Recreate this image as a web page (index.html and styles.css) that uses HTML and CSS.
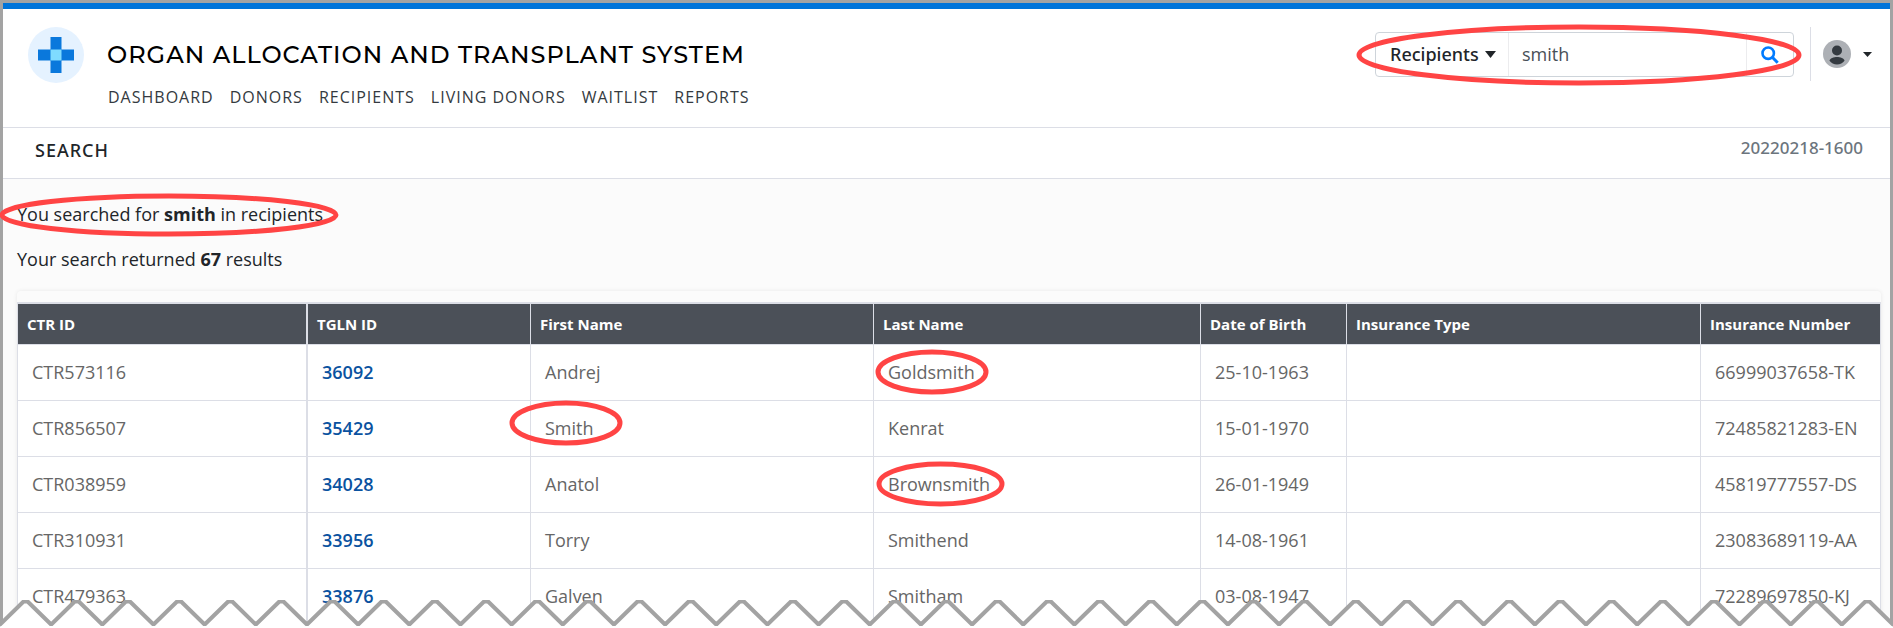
FILE: index.html
```html
<!DOCTYPE html>
<html lang="en">
<head>
    <meta charset="UTF-8">
    <meta name="viewport" content="width=device-width, initial-scale=1.0">
    <title>Search - Organ Allocation and Transplant System</title>
    <link rel="stylesheet" href="styles.css">
</head>
<body>
    <div class="frame">
        <header class="header">
            <svg class="logo" viewBox="0 0 56 56" aria-hidden="true">
                <circle cx="28" cy="28" r="28" fill="#e5f2ff"/>
                <path d="M22.5 10h11v12.5H46v11H33.5V46h-11V33.5H10v-11h12.5z" fill="#0a78dc"/>
                <path d="M22.5 22.5h11v11h-11z" fill="#7fdbff"/>
            </svg>
            <div class="brand">
                <h1 class="title">ORGAN ALLOCATION AND TRANSPLANT SYSTEM</h1>
                <nav class="nav">
                    <a href="#">DASHBOARD</a>
                    <a href="#">DONORS</a>
                    <a href="#">RECIPIENTS</a>
                    <a href="#">LIVING DONORS</a>
                    <a href="#">WAITLIST</a>
                    <a href="#">REPORTS</a>
                </nav>
            </div>
            <form class="search">
                <div class="search-type">
                    <select aria-label="Search in">
                        <option>Recipients</option>
                        <option>Donors</option>
                    </select>
                    <svg class="type-caret" viewBox="0 0 11 7" aria-hidden="true"><path d="M0 0h11L5.5 7z" fill="#212529"/></svg>
                </div>
                <input class="search-text" type="text" value="smith" aria-label="Search text">
                <button class="search-button" type="button" aria-label="Search">
                    <svg viewBox="0 0 18 18"><circle cx="7.2" cy="7.2" r="5.7" fill="none" stroke="#007bff" stroke-width="2.6"/><path d="M11.3 11.3l5.4 5.4" stroke="#007bff" stroke-width="3"/></svg>
                </button>
                <svg class="mark mark-search"><ellipse cx="50%" cy="50%" rx="50%" ry="50%"/></svg>
            </form>
            <button class="user" type="button" aria-label="Account">
                <svg class="avatar" viewBox="0 0 28 28"><circle cx="14" cy="14" r="14" fill="#adb0b5"/><circle cx="14" cy="10.5" r="5" fill="#343a40"/><path d="M6.5 20.8c0-2.5 4.5-3.8 7.5-3.8s7.5 1.3 7.5 3.8c-1.6 2.3-4.4 3.7-7.5 3.7s-5.9-1.4-7.5-3.7z" fill="#343a40"/></svg>
                <svg class="caret" viewBox="0 0 9 5"><path d="M0 0h9L4.5 5z" fill="#212529"/></svg>
            </button>
        </header>

        <div class="subheader">
            <h2 class="page-name">SEARCH</h2>
            <span class="version">20220218-1600</span>
        </div>

        <main class="content">
            <p class="summary">You searched for <strong>smith</strong> in recipients<svg class="mark mark-query"><ellipse cx="50%" cy="50%" rx="50%" ry="50%"/></svg></p>
            <p class="summary">Your search returned <strong>67</strong> results</p>

            <div class="card">
                <table class="results">
                    <colgroup>
                        <col class="col-ctr"><col class="col-tgln"><col class="col-first"><col class="col-last"><col class="col-dob"><col class="col-type"><col class="col-number">
                    </colgroup>
                    <thead>
                        <tr><th>CTR ID</th><th>TGLN ID</th><th>First Name</th><th>Last Name</th><th>Date of Birth</th><th>Insurance Type</th><th>Insurance Number</th></tr>
                    </thead>
                    <tbody>
                        <tr>
                            <td>CTR573116</td>
                            <td><a href="#">36092</a></td>
                            <td>Andrej</td>
                            <td><span class="hit">Goldsmith<svg class="mark mark-goldsmith"><ellipse cx="50%" cy="50%" rx="50%" ry="50%"/></svg></span></td>
                            <td>25-10-1963</td>
                            <td></td>
                            <td>66999037658-TK</td>
                        </tr>
                        <tr>
                            <td>CTR856507</td>
                            <td><a href="#">35429</a></td>
                            <td><span class="hit">Smith<svg class="mark mark-smith"><ellipse cx="50%" cy="50%" rx="50%" ry="50%"/></svg></span></td>
                            <td>Kenrat</td>
                            <td>15-01-1970</td>
                            <td></td>
                            <td>72485821283-EN</td>
                        </tr>
                        <tr>
                            <td>CTR038959</td>
                            <td><a href="#">34028</a></td>
                            <td>Anatol</td>
                            <td><span class="hit">Brownsmith<svg class="mark mark-brownsmith"><ellipse cx="50%" cy="50%" rx="50%" ry="50%"/></svg></span></td>
                            <td>26-01-1949</td>
                            <td></td>
                            <td>45819777557-DS</td>
                        </tr>
                        <tr>
                            <td>CTR310931</td>
                            <td><a href="#">33956</a></td>
                            <td>Torry</td>
                            <td>Smithend</td>
                            <td>14-08-1961</td>
                            <td></td>
                            <td>23083689119-AA</td>
                        </tr>
                        <tr>
                            <td>CTR479363</td>
                            <td><a href="#">33876</a></td>
                            <td>Galven</td>
                            <td>Smitham</td>
                            <td>03-08-1947</td>
                            <td></td>
                            <td>72289697850-KJ</td>
                        </tr>
                    </tbody>
                </table>
            </div>
        </main>

        <!-- Torn bottom edge, 37 teeth -->
        <svg class="torn-edge" viewBox="0 0 1887 28" preserveAspectRatio="none" aria-hidden="true">
            <path fill="#fff" stroke="#a3a3a3" stroke-width="4" stroke-linejoin="bevel" d="M0 24.5
                l23.5-23h4l23.5 23l23.5-23h4l23.5 23l23.5-23h4l23.5 23l23.5-23h4l23.5 23l23.5-23h4l23.5 23
                l23.5-23h4l23.5 23l23.5-23h4l23.5 23l23.5-23h4l23.5 23l23.5-23h4l23.5 23l23.5-23h4l23.5 23
                l23.5-23h4l23.5 23l23.5-23h4l23.5 23l23.5-23h4l23.5 23l23.5-23h4l23.5 23l23.5-23h4l23.5 23
                l23.5-23h4l23.5 23l23.5-23h4l23.5 23l23.5-23h4l23.5 23l23.5-23h4l23.5 23l23.5-23h4l23.5 23
                l23.5-23h4l23.5 23l23.5-23h4l23.5 23l23.5-23h4l23.5 23l23.5-23h4l23.5 23l23.5-23h4l23.5 23
                l23.5-23h4l23.5 23l23.5-23h4l23.5 23l23.5-23h4l23.5 23l23.5-23h4l23.5 23l23.5-23h4l23.5 23
                l23.5-23h4l23.5 23l23.5-23h4l23.5 23l23.5-23h4l23.5 23l23.5-23h4l23.5 23l23.5-23h4l23.5 23
                l23.5-23h4l23.5 23l23.5-23h4l23.5 23
                l10 0V40H-10V24.5z"/>
        </svg>
    </div>
</body>
</html>
```
FILE: styles.css
```css
* { margin: 0; padding: 0; box-sizing: border-box; }

body {
    font-family: "Open Sans", "Noto Sans", sans-serif;
    font-size: 18px;
    line-height: 27px;
    color: #212529;
    background: #fbfbfb;
    overflow-x: hidden;
}

a { text-decoration: none; }

button, input, select {
    font: inherit;
    border: 0;
    background: none;
}

.frame {
    position: relative;
    min-height: 100vh;
    border: 3px solid #a3a3a3;
    border-bottom: 0;
}

/* Header */
.header {
    display: flex;
    align-items: flex-start;
    padding: 18px 17px 12px 25px;
    background: #fff;
    border-top: 6px solid #0074d9;
    border-bottom: 1px solid #dcdee6;
}

.logo {
    width: 56px;
    height: 56px;
    flex: none;
}

.brand {
    margin-left: 23px;
    padding-top: 10px;
}

.title {
    font-family: Montserrat, Inter, sans-serif;
    font-size: 24px;
    font-weight: 500;
    line-height: 36px;
    letter-spacing: 1px;
    color: #000;
    white-space: nowrap;
}

.nav {
    display: flex;
    gap: 16px;
    padding: 12px 0 6px 1px;
    font-size: 16px;
    line-height: 24px;
    letter-spacing: 1px;
    white-space: nowrap;
}

.nav a { color: #343a40; }

.search {
    position: relative;
    display: flex;
    width: 419px;
    height: 45px;
    margin: 5px 16px 0 auto;
    border: 1px solid #ced4da;
    border-radius: 4px;
}

.search-type {
    position: relative;
    width: 133px;
    border-right: 1px solid #ececee;
}

.search-type select {
    width: 100%;
    height: 100%;
    padding-left: 14px;
    font-family: "Noto Sans", sans-serif;
    font-weight: 500;
    color: #212529;
    appearance: none;
}

.type-caret {
    position: absolute;
    top: 18px;
    right: 12px;
    width: 11px;
    height: 7px;
    pointer-events: none;
}

.search-text {
    flex: 1;
    min-width: 0;
    padding-left: 13px;
    color: #495057;
}

.search-button {
    width: 47px;
    border-left: 1px solid #ececee;
}

.search-button svg {
    display: block;
    width: 18px;
    height: 18px;
    margin: 0 auto;
}

.user {
    display: flex;
    align-items: center;
    gap: 12px;
    height: 54px;
    padding: 0 1px 0 12px;
    border-left: 1px solid #dcdee6;
}

.avatar { width: 28px; height: 28px; }
.caret { width: 9px; height: 5px; }

/* Page name bar */
.subheader {
    display: flex;
    justify-content: space-between;
    padding: 9px 27px 14px 32px;
    background: #fff;
    border-bottom: 1px solid #dcdee6;
}

.page-name {
    font-family: "Noto Sans", sans-serif;
    font-size: 18px;
    font-weight: 500;
    line-height: 27px;
    letter-spacing: 1px;
}

.version {
    font-family: "Noto Sans", sans-serif;
    font-size: 17px;
    font-weight: 500;
    line-height: 22px;
    color: #6c757d;
}

/* Results */
.content { padding: 22px 9px 0 14px; }

.summary {
    position: relative;
    margin-bottom: 18px;
}

.card {
    padding-top: 11px;
    border-radius: 4px;
    box-shadow: 0 0 4px rgba(0, 0, 0, 0.08);
}

.results {
    width: 100%;
    table-layout: fixed;
    border-collapse: separate;
    border-spacing: 0;
    border-top: 2px solid #dcdee6;
    border-left: 1px solid #dcdee6;
    background: #fff;
}

.col-ctr { width: 290px; }
.col-tgln { width: 223px; }
.col-first { width: 343px; }
.col-last { width: 327px; }
.col-dob { width: 146px; }
.col-number { width: 180px; }

.results th, .results td {
    text-align: left;
    white-space: nowrap;
    border-right: 1px solid #dcdee6;
    border-bottom: 1px solid #dcdee6;
}

.results th:first-child, .results td:first-child { border-right-width: 2px; }

.results th {
    height: 41px;
    padding: 0 9px;
    font-size: 15px;
    font-weight: 700;
    line-height: 24px;
    color: #fff;
    background: #4b5058;
}

.results td {
    height: 56px;
    padding: 0 0 1px 14px;
    color: #666;
}

.results td a {
    font-weight: 600;
    color: #0a52a0;
}

.hit { position: relative; }

/* Red rings round the matches */
.mark {
    position: absolute;
    z-index: 1;
    overflow: visible;
    fill: none;
    stroke: #ff4444;
    stroke-width: 5px;
    pointer-events: none;
}

.mark-search { top: -6px; left: -17px; width: 440px; height: 56px; }
.mark-query { top: -5px; left: -15px; width: 334px; height: 38px; }
.mark-goldsmith { top: -8px; left: -10px; width: 108px; height: 40px; }
.mark-smith { top: -13px; left: -33px; width: 108px; height: 40px; }
.mark-brownsmith { top: -8px; left: -9px; width: 123px; height: 40px; }

.torn-edge {
    position: absolute;
    bottom: 0;
    left: -3px;
    width: calc(100% + 6px);
    height: 28px;
}
```
